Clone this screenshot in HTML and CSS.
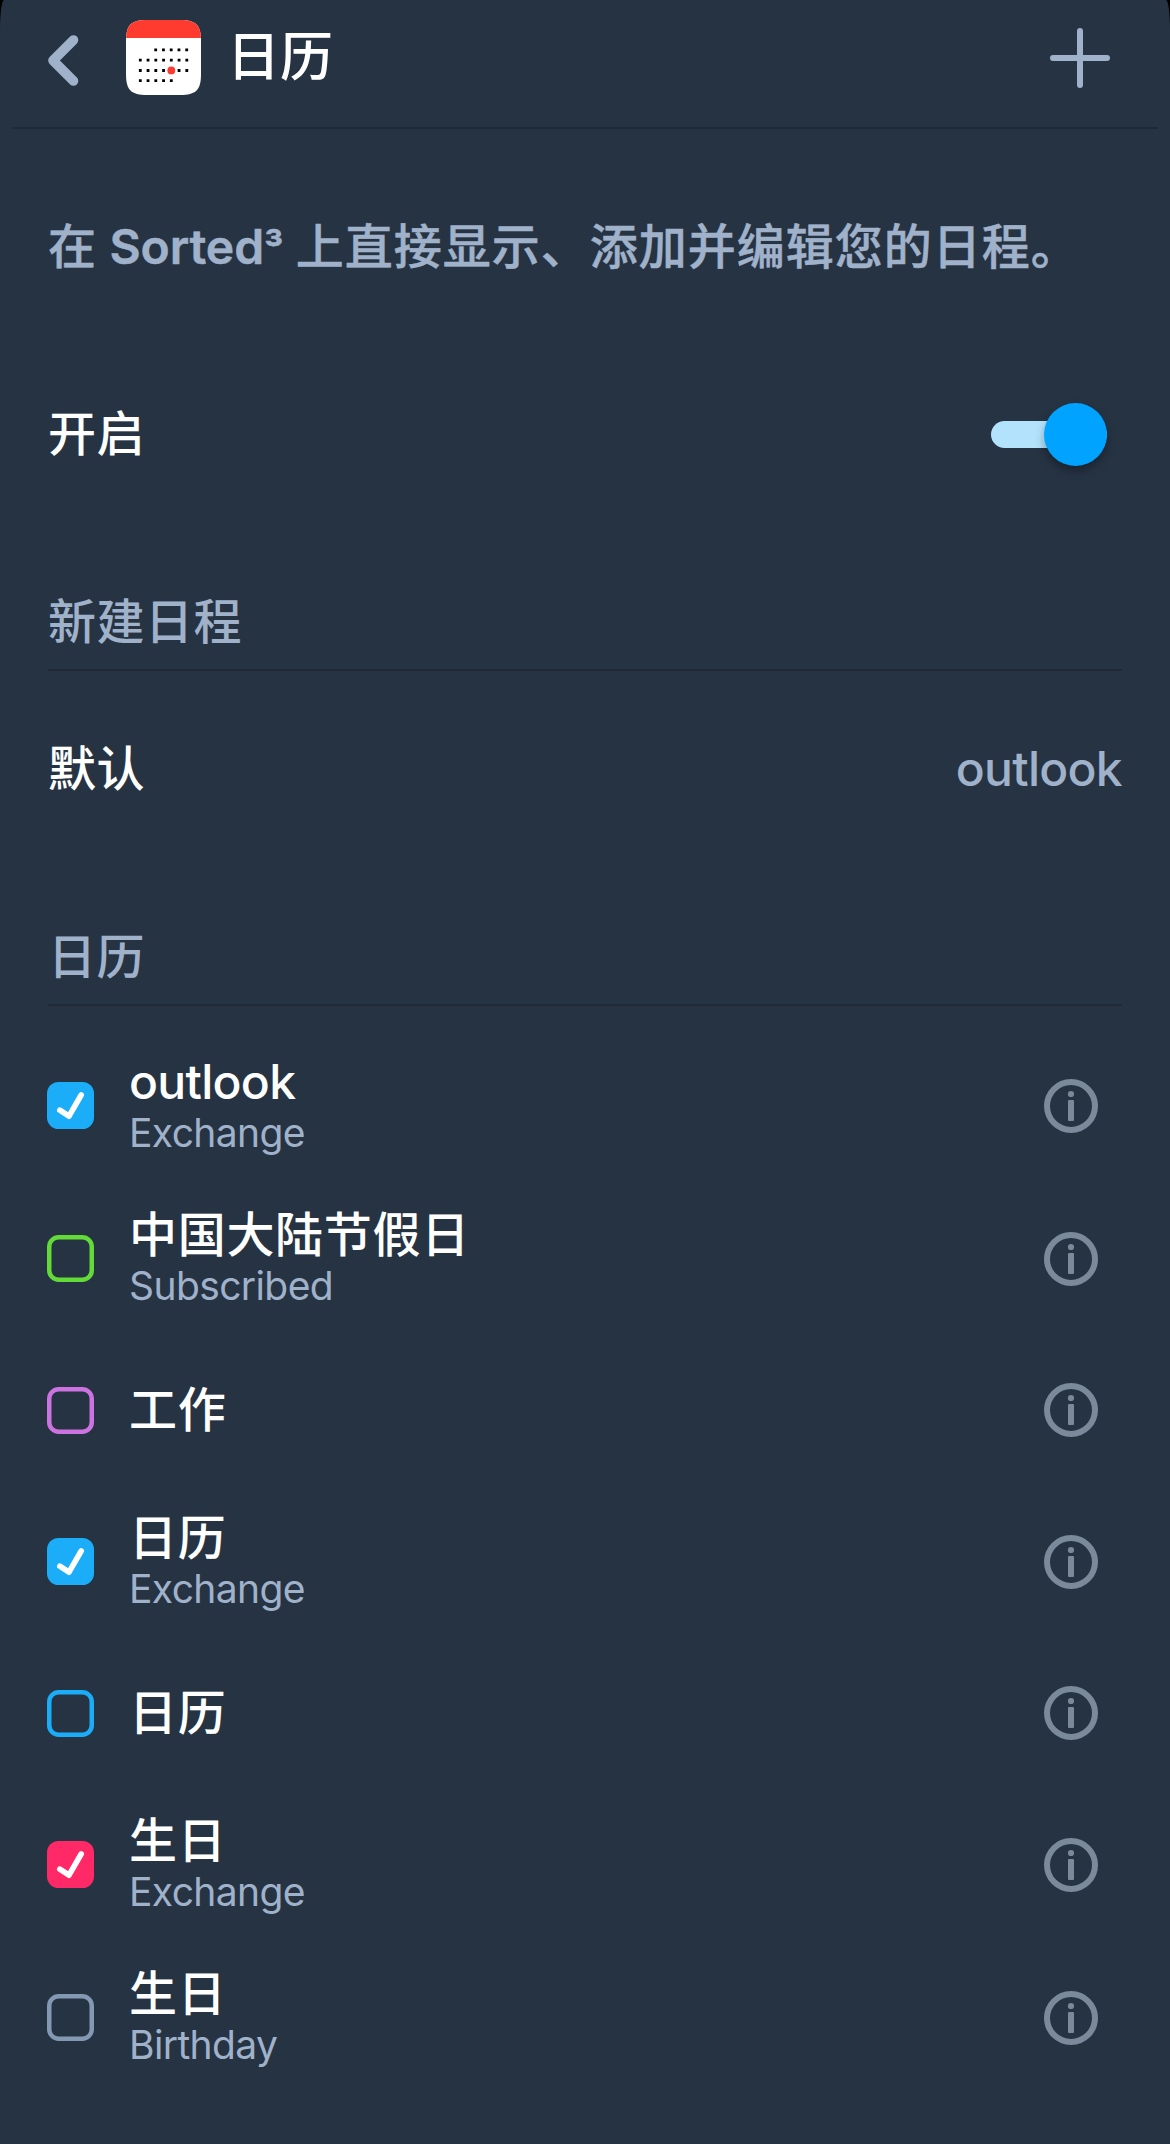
FILE: index.html
```html
<!DOCTYPE html>
<html lang="zh-CN">
<head>
<meta charset="utf-8">
<title>日历</title>
<link rel="stylesheet" href="styles.css">
</head>
<body>
<svg class="defs" width="0" height="0" aria-hidden="true">
  <symbol id="info" viewBox="0 0 54 54">
    <circle cx="27" cy="27" r="24" fill="none" stroke="currentColor" stroke-width="6"/>
    <circle cx="27" cy="15" r="3.1" fill="currentColor"/>
    <rect x="24" y="21" width="6" height="21" rx="1" fill="currentColor"/>
  </symbol>
  <symbol id="box" viewBox="0 0 47 47">
    <rect x="2.25" y="2.25" width="42.5" height="42.5" rx="9.5" fill="none" stroke="currentColor" stroke-width="4.5"/>
  </symbol>
  <symbol id="box-on" viewBox="0 0 47 47">
    <rect width="47" height="47" rx="11.5" fill="currentColor"/>
    <path d="M12.8 28.2 22 34.2 34.2 13" fill="none" stroke="#fff" stroke-width="5.6" stroke-linecap="round" stroke-linejoin="round"/>
  </symbol>
</svg>
<div class="screen">
  <header class="header">
    <svg class="back" width="32" height="54" viewBox="0 0 32 54"><path d="M26.5 6 6 26.5 26.5 47" fill="none" stroke="currentColor" stroke-width="9.6" stroke-linecap="round" stroke-linejoin="round"/></svg>
    <svg class="app" width="75" height="75" viewBox="0 0 75 75">
      <clipPath id="tile"><path d="M0 21C0 5 5 0 21 0H54C70 0 75 5 75 21V54C75 70 70 75 54 75H21C5 75 0 70 0 54Z"/></clipPath>
      <g clip-path="url(#tile)"><rect width="75" height="75" fill="#fff"/><rect width="75" height="18" fill="#ff3b30"/></g>
      <g fill="none" stroke="#000" stroke-width="2.8" stroke-dasharray="2.8 4.95">
        <path d="M28.3 29.8H63"/><path d="M12.9 40.2H63"/><path d="M12.9 50.5H63"/><path d="M12.9 60.6H47"/>
      </g>
      <circle cx="45.3" cy="50.4" r="3.9" fill="#ff3b30"/>
    </svg>
    <h1 class="title">日历</h1>
    <svg class="add" width="60" height="60" viewBox="0 0 60 60"><path d="M3 30H57M30 3V57" stroke="currentColor" stroke-width="6" stroke-linecap="round"/></svg>
  </header>
  <main class="content">
    <p class="intro">在 <span class="brand">Sorted<span class="cube">³</span></span> 上直接显示、添加并编辑您的日程。</p>
    <div class="setting enable"><span>开启</span><span class="switch"><span class="knob"></span></span></div>
    <h2 class="section">新建日程</h2>
    <div class="setting default"><span>默认</span><span class="value">outlook</span></div>
    <h2 class="section">日历</h2>
    <ul class="list">
      <li class="row"><svg class="check sky"><use href="#box-on"/></svg><div class="label"><div class="name latin">outlook</div><div class="source">Exchange</div></div><svg class="info"><use href="#info"/></svg></li>
      <li class="row"><svg class="check green"><use href="#box"/></svg><div class="label"><div class="name">中国大陆节假日</div><div class="source">Subscribed</div></div><svg class="info"><use href="#info"/></svg></li>
      <li class="row single"><svg class="check purple"><use href="#box"/></svg><div class="label"><div class="name">工作</div></div><svg class="info"><use href="#info"/></svg></li>
      <li class="row"><svg class="check sky"><use href="#box-on"/></svg><div class="label"><div class="name">日历</div><div class="source">Exchange</div></div><svg class="info"><use href="#info"/></svg></li>
      <li class="row single"><svg class="check sky"><use href="#box"/></svg><div class="label"><div class="name">日历</div></div><svg class="info"><use href="#info"/></svg></li>
      <li class="row"><svg class="check pink"><use href="#box-on"/></svg><div class="label"><div class="name">生日</div><div class="source">Exchange</div></div><svg class="info"><use href="#info"/></svg></li>
      <li class="row"><svg class="check slate"><use href="#box"/></svg><div class="label"><div class="name">生日</div><div class="source">Birthday</div></div><svg class="info"><use href="#info"/></svg></li>
    </ul>
  </main>
</div>
</body>
</html>
```

FILE: styles.css
```css
* { box-sizing: border-box; }
body {
  margin: 0;
  background: #000;
  color: #fff;
  font-family: Inter, "Noto Sans CJK SC", sans-serif;
  font-size: 48px;
  font-weight: 500;
  line-height: 60px;
  letter-spacing: 0.5px;
}
h1, h2, p, ul { margin: 0; padding: 0; font-size: inherit; font-weight: inherit; }
svg { display: block; flex: none; }
.defs { position: absolute; }
.screen {
  height: 2144px;
  background: #263343;
  border-radius: 4px 4px 0 0 / 30px 30px 0 0;
}
.header {
  display: flex;
  align-items: flex-start;
  height: 129px;
  margin: 0 12px;
  padding: 0 48px 0 35px;
  border-bottom: 2px solid #1f2a36;
}
.back { margin-top: 34px; color: #a0b1ca; }
.app { margin: 20px 0 0 47px; }
.title { margin: 27px 0 0 26px; font-size: 53px; letter-spacing: 0; }
.add { margin: 28px 0 0 auto; color: #a0b1ca; }
.content { padding: 0 48px; }
.intro {
  height: 60px;
  margin-top: 88px;
  color: #a0b1ca;
  letter-spacing: 1px;
  word-spacing: -1.4px;
  white-space: nowrap;
  -webkit-text-stroke: 0.5px #a0b1ca;
}
.brand { font-weight: 600; letter-spacing: -0.1px; }
.cube { font-size: 42px; line-height: 1; }
.setting { display: flex; justify-content: space-between; align-items: center; height: 64px; }
.enable { margin-top: 125px; }
.switch {
  display: flex;
  align-items: center;
  justify-content: flex-end;
  width: 116px;
  height: 27px;
  margin-right: 15px;
  border-radius: 14px;
  background: #b3e3fc;
}
.knob {
  flex: none;
  width: 63px;
  height: 63px;
  border-radius: 50%;
  background: #00a3ff;
  box-shadow: 0 5px 10px rgba(0, 0, 0, 0.3);
}
.section {
  height: 79px;
  margin-top: 126px;
  border-bottom: 2px solid #1f2a36;
  color: #a0b1ca;
}
.default { margin-top: 66px; }
.value { color: #a0b1ca; letter-spacing: -0.7px; }
.list { margin-top: 23px; list-style: none; }
.row { display: flex; align-items: center; height: 153px; }
.single { height: 150px; }
.check { width: 47px; height: 47px; margin-left: -1px; }
.label { flex: 1; margin-left: 35px; padding-top: 6px; }
.single .label { padding: 0 0 1px; }
.name { line-height: 48px; letter-spacing: 0.7px; }
.latin { letter-spacing: -0.7px; }
.source { color: #a0b1ca; font-size: 39px; font-weight: 400; line-height: 54px; letter-spacing: -0.6px; }
.info { width: 54px; height: 54px; margin-right: 24px; color: #7b8a9a; }
.sky { color: #1badf8; }
.green { color: #63da38; }
.purple { color: #cc73e1; }
.pink { color: #ff2968; }
.slate { color: #8398b3; }
```
